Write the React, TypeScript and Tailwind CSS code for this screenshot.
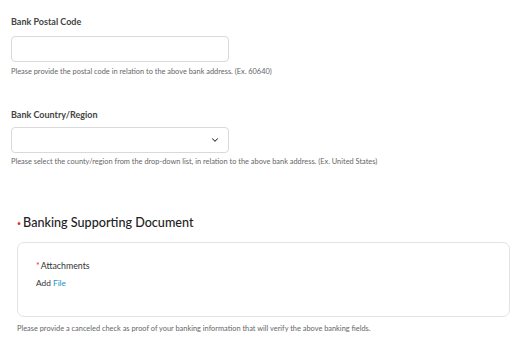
import { ChevronDown } from "lucide-react";

const font = { fontFamily: "Lato, 'Open Sans', sans-serif" };

type FieldProps = {
  label: string;
  help: string;
  select?: boolean;
  boxGap: string;
  helpGap: string;
};

function Field({ label, help, select, boxGap, helpGap }: FieldProps) {
  return (
    <div className="flex flex-col">
      <label className="text-[9px] font-bold text-[#444] leading-[12px]">{label}</label>
      <div
        className={`${boxGap} w-[218px] h-[26px] border border-[#d9d9d9] rounded-[4px] bg-white flex items-center justify-end pr-[8px]`}
      >
        {select && <ChevronDown size={10} strokeWidth={2.5} className="text-[#333]" />}
      </div>
      <p className={`${helpGap} text-[7.4px] text-[#666] leading-[10px]`}>{help}</p>
    </div>
  );
}

export default function App() {
  return (
    <div className="w-[532px] h-[350px] bg-white overflow-hidden" style={font}>
      <div className="pl-[11px] pt-[16px] flex flex-col gap-[32px]">
        <Field
          label="Bank Postal Code"
          boxGap="mt-[8px]"
          helpGap="mt-[5px]"
          help="Please provide the postal code in relation to the above bank address. (Ex. 60640)"
        />
        <Field
          label="Bank Country/Region"
          select
          boxGap="mt-[6px]"
          helpGap="mt-[4px]"
          help="Please select the county/region from the drop-down list, in relation to the above bank address. (Ex. United States)"
        />
      </div>

      <div className="pl-[17px] pr-[22px] mt-[48px]">
        <h2 className="flex items-center text-[12.6px] font-medium text-[#222] leading-[16px]">
          <span className="text-[#d33] text-[7px] mr-[2px]">•</span>
          Banking Supporting Document
        </h2>
        <div className="mt-[11px] h-[75px] border border-[#e3e3e3] rounded-[7px] px-[18px] pt-[17px]">
          <div className="text-[8.8px] text-[#333] leading-[11px]">
            <span className="text-[#d33] mr-[1px]">*</span>Attachments
          </div>
          <div className="mt-[7px] text-[8.3px] text-[#333] leading-[11px]">
            Add <span className="text-[#1a94c9]">File</span>
          </div>
        </div>
        <p className="mt-[7px] text-[7.4px] text-[#666] leading-[10px]">
          Please provide a canceled check as proof of your banking information that will verify the above banking fields.
        </p>
      </div>
    </div>
  );
}
